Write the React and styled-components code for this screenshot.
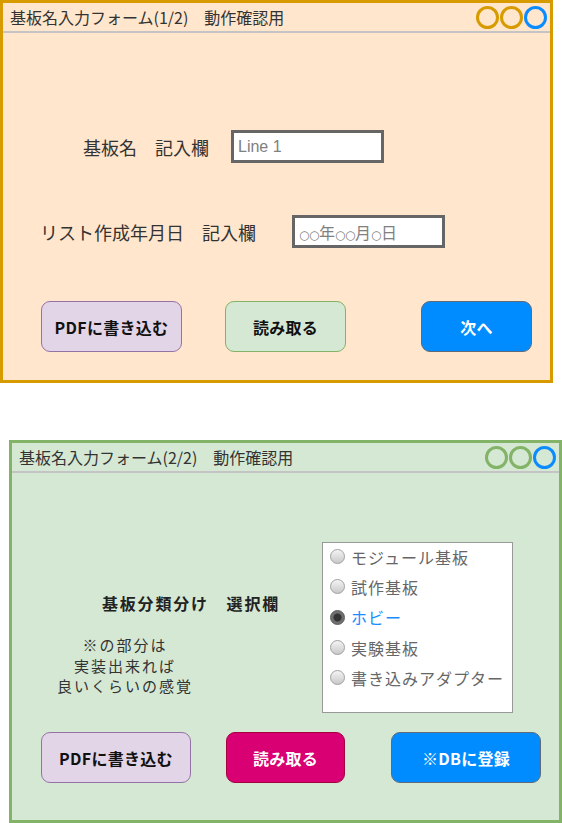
import React from "react";
import styled, { createGlobalStyle } from "styled-components";

const Global = createGlobalStyle`
  html, body { margin: 0; padding: 0; background: #fff; }
  body { font-family: "Noto Sans CJK JP", "Noto Sans", sans-serif; color: #333; }
`;

const Page = styled.div`
  display: flex;
  flex-direction: column;
  width: 562px;
`;

const Win = styled.div`
  box-sizing: border-box;
  width: 553px;
  height: 383px;
  border: 3px solid ${(p) => p.$stroke};
  background: ${(p) => p.$fill};
  margin: ${(p) => p.$mt}px 0 0 ${(p) => p.$ml}px;
  display: flex;
  flex-direction: column;
`;

const TitleBar = styled.div`
  height: 28px;
  border-bottom: 2px solid #c4c4c4;
  display: flex;
  align-items: center;
  justify-content: space-between;
  padding: 0 3px 0 7px;
`;

const Title = styled.span`
  font-size: 16px;
  color: #333;
  white-space: pre;
`;

const Dots = styled.div`
  display: flex;
  gap: 1px;
  margin-top: 1px;
`;

const Dot = styled.span`
  box-sizing: border-box;
  width: 23px;
  height: 23px;
  border-radius: 50%;
  border: 3px solid ${(p) => p.$c};
`;

const Body = styled.div`
  display: flex;
  flex-direction: column;
  padding-top: ${(p) => p.$pt}px;
`;

const FieldRow = styled.div`
  display: flex;
  align-items: center;
  height: 33px;
  padding-left: ${(p) => p.$pl}px;
  gap: ${(p) => p.$gap}px;
  margin-top: ${(p) => p.$mt || 0}px;
`;

const Label = styled.span`
  font-size: 18px;
  color: #333;
  white-space: pre;
`;

const Input = styled.div`
  box-sizing: border-box;
  width: 153px;
  height: 33px;
  border: 3px solid #666;
  background: #fff;
  display: flex;
  align-items: center;
  padding-left: 4px;
  font-family: "Liberation Sans", "Noto Sans CJK JP", sans-serif;
  font-size: 16px;
  color: #808080;
  white-space: pre;
`;

const DateText = styled.span`
  font-family: "Noto Sans CJK JP", sans-serif;
  font-size: 16px;
  color: #808080;
`;

const Circ = styled.span`
  font-family: "DejaVu Sans", sans-serif;
  font-size: 12px;
  letter-spacing: -0.5px;
`;

const ButtonRow = styled.div`
  display: flex;
  align-items: center;
  margin-top: ${(p) => p.$mt}px;
`;

const Btn = styled.div`
  box-sizing: border-box;
  width: ${(p) => p.$w}px;
  height: ${(p) => p.$h || 51}px;
  margin-left: ${(p) => p.$ml}px;
  border: 1px solid ${(p) => p.$stroke};
  background: ${(p) => p.$fill};
  color: ${(p) => p.$color};
  border-radius: 9px;
  display: flex;
  align-items: center;
  justify-content: center;
  font-weight: bold;
  font-size: 16px;
  letter-spacing: 0.3px;
`;

const Middle = styled.div`
  display: flex;
  align-items: flex-start;
`;

const LeftCol = styled.div`
  width: 310px;
  display: flex;
  flex-direction: column;
`;

const BoldLabel = styled.div`
  margin: 50px 0 0 90px;
  font-size: 16px;
  font-weight: bold;
  line-height: 22px;
  letter-spacing: 1.8px;
  color: #222;
  white-space: pre;
`;

const Note = styled.div`
  width: 200px;
  margin: 21px 0 0 13px;
  text-align: center;
  font-size: 15px;
  line-height: 20.5px;
  letter-spacing: 2px;
  color: #333;
`;

const RadioBox = styled.div`
  box-sizing: border-box;
  width: 191px;
  height: 171px;
  border: 1px solid #999;
  background: #fff;
  display: flex;
  flex-direction: column;
  padding: 0 0 0 7px;
`;

const RadioItem = styled.div`
  display: flex;
  align-items: center;
  height: 30.3px;
  margin-top: ${(p) => (p.$first ? -1.5 : 0)}px;
  gap: 6px;
  font-size: 16px;
  letter-spacing: 1px;
  color: ${(p) => (p.$on ? "#1a8cff" : "#666")};
  white-space: nowrap;
`;

const Radio = styled.span`
  box-sizing: border-box;
  flex: none;
  width: 15px;
  height: 15px;
  border-radius: 50%;
  border: 1px solid ${(p) => (p.$on ? "#555" : "#a0a0a0")};
  background: ${(p) =>
    p.$on
      ? "radial-gradient(circle, #333 0 3.5px, #6d6d6d 4.5px, #7a7a7a 100%)"
      : "linear-gradient(#f4f4f4, #c9c9c9)"};
`;

const TitleBarBlock = ({ text, c }) => (
  <TitleBar>
    <Title>{text}</Title>
    <Dots>
      <Dot $c={c} />
      <Dot $c={c} />
      <Dot $c="#0a8cff" />
    </Dots>
  </TitleBar>
);

const options = ["モジュール基板", "試作基板", "ホビー", "実験基板", "書き込みアダプター"];

export default function App() {
  return (
    <Page>
      <Global />
      <Win $stroke="#d79b00" $fill="#ffe6cc" $mt={0} $ml={0}>
        <TitleBarBlock text="基板名入力フォーム(1/2)　動作確認用" c="#d79b00" />
        <Body $pt={97}>
          <FieldRow $pl={80} $gap={22}>
            <Label>基板名　記入欄</Label>
            <Input>Line 1</Input>
          </FieldRow>
          <FieldRow $pl={37} $gap={36} $mt={52}>
            <Label>リスト作成年月日　記入欄</Label>
            <Input>
              <DateText>
                <Circ>○○</Circ>年<Circ>○○</Circ>月<Circ>○</Circ>日
              </DateText>
            </Input>
          </FieldRow>
          <ButtonRow $mt={53}>
            <Btn $w={141} $ml={38} $fill="#e1d5e7" $stroke="#9673a6" $color="#111">
              PDFに書き込む
            </Btn>
            <Btn $w={121} $ml={43} $fill="#d5e8d4" $stroke="#82b366" $color="#111">
              読み取る
            </Btn>
            <Btn $w={111} $ml={75} $fill="#008cff" $stroke="#5f6b78" $color="#fff">
              次へ
            </Btn>
          </ButtonRow>
        </Body>
      </Win>

      <Win $stroke="#82b366" $fill="#d5e8d4" $mt={57} $ml={9}>
        <TitleBarBlock text="基板名入力フォーム(2/2)　動作確認用" c="#82b366" />
        <Body $pt={69}>
          <Middle>
            <LeftCol>
              <BoldLabel>基板分類分け　選択欄</BoldLabel>
              <Note>
                ※の部分は
                <br />
                実装出来れば
                <br />
                良いくらいの感覚
              </Note>
            </LeftCol>
            <RadioBox>
              {options.map((o, i) => (
                <RadioItem key={o} $on={o === "ホビー"} $first={i === 0}>
                  <Radio $on={o === "ホビー"} />
                  {o}
                </RadioItem>
              ))}
            </RadioBox>
          </Middle>
          <ButtonRow $mt={19}>
            <Btn $w={150} $ml={29} $fill="#e1d5e7" $stroke="#9673a6" $color="#111">
              PDFに書き込む
            </Btn>
            <Btn $w={119} $ml={35} $fill="#d80073" $stroke="#a50040" $color="#fff">
              読み取る
            </Btn>
            <Btn $w={150} $ml={46} $fill="#008cff" $stroke="#5f6b78" $color="#fff">
              ※DBに登録
            </Btn>
          </ButtonRow>
        </Body>
      </Win>
    </Page>
  );
}
